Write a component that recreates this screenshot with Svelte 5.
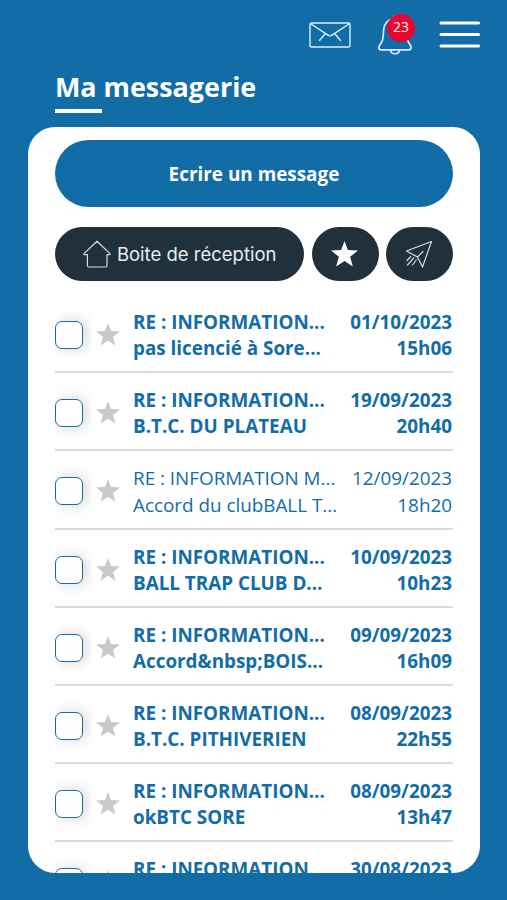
<script lang="ts">
	interface Message {
		subject: string;
		from: string;
		date: string;
		time: string;
		read?: boolean;
	}

	const unread = 23;

	const messages: Message[] = [
		{ subject: 'RE : INFORMATION...', from: 'pas licencié à Sore...', date: '01/10/2023', time: '15h06' },
		{ subject: 'RE : INFORMATION...', from: 'B.T.C. DU PLATEAU', date: '19/09/2023', time: '20h40' },
		{ subject: 'RE : INFORMATION M...', from: 'Accord du clubBALL T...', date: '12/09/2023', time: '18h20', read: true },
		{ subject: 'RE : INFORMATION...', from: 'BALL TRAP CLUB D...', date: '10/09/2023', time: '10h23' },
		{ subject: 'RE : INFORMATION...', from: 'Accord&nbsp;BOIS...', date: '09/09/2023', time: '16h09' },
		{ subject: 'RE : INFORMATION...', from: 'B.T.C. PITHIVERIEN', date: '08/09/2023', time: '22h55' },
		{ subject: 'RE : INFORMATION...', from: 'okBTC SORE', date: '08/09/2023', time: '13h47' },
		{ subject: 'RE : INFORMATION...', from: '', date: '30/08/2023', time: '' }
	];
</script>

<div class="screen">
	<header>
		<button class="icon" aria-label="Messages">
			<svg width="42" height="26" viewBox="0 0 42 26">
				<rect x="1" y="1" width="40" height="24" rx="1.5" />
				<path d="M2 2 L19 13.2 Q21 14.5 23 13.2 L40 2 M16 12 L10.5 18.5 M26 12 L31.5 18.5" />
			</svg>
		</button>
		<button class="icon bell" aria-label="Notifications">
			<svg width="36" height="40" viewBox="0 0 36 40">
				<path d="M18 3.5 C10 4 6.5 10 6.5 16 C6.5 25 5 27 2.2 31 Q1 34.8 4 34.8 H32 Q35 34.8 33.8 31 C31 27 29.5 25 29.5 16 C29.5 10 26 4 18 3.5 Z M13.5 35 C14 40 22 40 22.5 35 M16 3.5 Q16 1.4 18 1.4" />
			</svg>
			<span class="badge">{unread}</span>
		</button>
		<button class="icon menu" aria-label="Menu">
			<svg width="42" height="28" viewBox="0 0 42 28">
				<path d="M3 2 H40.5 M3 13.5 H40.5 M3 25 H40.5" />
			</svg>
		</button>
	</header>

	<h1>Ma messagerie</h1>

	<main>
		<button class="compose">Ecrire un message</button>

		<nav>
			<button class="tab inbox">
				<svg width="28" height="28" viewBox="0 0 28 28">
					<path d="M14 1.2 L1 13.6 Q.6 14.6 1.6 14.6 H4.4 V25.5 Q4.4 27 6 27 H22.5 Q24 27 24 25.5 V14.6 H26.6 Q27.4 14.6 27 13.6 Z" />
				</svg>
				Boite de réception
			</button>
			<button class="tab" aria-label="Favoris">
				<svg class="filled" width="27" height="26" viewBox="0 0 24 23">
					<path d="M12 0 L15 8 L24 8.4 L17 14 L19.4 22.6 L12 17.7 L4.6 22.6 L7 14 L0 8.4 L9 8 Z" />
				</svg>
			</button>
			<button class="tab" aria-label="Envoyés">
				<svg class="plane" width="28" height="28" viewBox="0 0 28 28">
					<path d="M26.5 1.5 L1.5 11 L12.5 17 L17.5 27 Z M12.5 17 L18 11.5 M5.8 16.5 L2 20.5 M8.8 17.8 L2.5 25 M11.2 20 L7.5 25" />
				</svg>
			</button>
		</nav>

		<ul>
			{#each messages as message}
				<li class:read={message.read}>
					<input type="checkbox" aria-label="Sélectionner" />
					<svg class="star" width="24" height="23" viewBox="0 0 24 23">
						<path d="M12 0 L15 8 L24 8.4 L17 14 L19.4 22.6 L12 17.7 L4.6 22.6 L7 14 L0 8.4 L9 8 Z" />
					</svg>
					<div class="text">
						<div>{message.subject}</div>
						<div>{message.from}</div>
					</div>
					<div class="when">
						<div>{message.date}</div>
						<div>{message.time}</div>
					</div>
				</li>
			{/each}
		</ul>
	</main>
</div>

<style>
	:global(body) {
		background: #126da7;
	}

	.screen {
		box-sizing: border-box;
		height: 900px;
		padding: 14px 27px 27px 28px;
		overflow: hidden;
		background: #126da7;
		font-family: 'Open Sans', sans-serif;
		display: flex;
		flex-direction: column;
	}

	button {
		border: none;
		padding: 0;
		font: inherit;
		color: #fff;
		cursor: pointer;
	}

	svg {
		display: block;
		flex: none;
		fill: none;
		stroke: #d9efff;
		stroke-width: 1.4;
		stroke-linejoin: round;
		stroke-linecap: round;
	}

	header {
		height: 42px;
		display: flex;
		justify-content: flex-end;
		align-items: center;
	}

	.icon {
		background: none;
	}

	.bell {
		position: relative;
		margin: 0 25px 0 26px;
	}

	.bell svg {
		stroke-width: 1.7;
	}

	.menu svg {
		stroke: #fff;
		stroke-width: 3;
	}

	.badge {
		position: absolute;
		top: -1px;
		left: 10px;
		width: 28px;
		height: 28px;
		border-radius: 50%;
		background: #e8062f;
		font-size: 14px;
		line-height: 26px;
		text-align: center;
	}

	h1 {
		margin: 13px 0 0 27px;
		font-size: 26.9px;
		line-height: 36px;
		font-weight: 700;
		color: #fff;
	}

	h1::after {
		content: '';
		display: block;
		width: 47px;
		height: 4px;
		margin-top: 4px;
		background: #fff;
	}

	main {
		flex: 1;
		min-height: 0;
		margin-top: 14px;
		padding: 13px 27px 0;
		overflow: hidden;
		background: #fff;
		border-radius: 27px;
	}

	.compose {
		display: block;
		width: 100%;
		height: 67px;
		border-radius: 34px;
		background: #126da7;
		font-size: 18.9px;
		font-weight: 700;
	}

	nav {
		display: flex;
		gap: 7.3px;
		margin-top: 20px;
	}

	.tab {
		width: 67px;
		height: 54px;
		border-radius: 27px;
		background: #20313b;
		display: flex;
		align-items: center;
		justify-content: center;
	}

	.tab svg {
		stroke: #d3dde2;
		stroke-width: 1.2;
	}

	.inbox {
		flex: 1;
		gap: 6px;
		font-family: Inter, sans-serif;
		font-size: 18.5px;
		color: #e6eef2;
		white-space: nowrap;
	}

	.tab .plane {
		margin-right: 2px;
	}

	.tab .filled {
		margin-right: 2px;
		fill: #fff;
		stroke: none;
	}

	ul {
		list-style: none;
		margin: 14px 0 0;
		padding: 0;
	}

	li {
		box-sizing: border-box;
		height: 78.18px;
		padding-top: 14px;
		border-bottom: 2px solid #dcdcdc;
		display: flex;
		color: #126da7;
		font-size: 18.85px;
		line-height: 26.2px;
		font-weight: 700;
		white-space: nowrap;
	}

	li.read {
		font-weight: 400;
	}

	input {
		appearance: none;
		box-sizing: border-box;
		flex: none;
		width: 28px;
		height: 28px;
		margin: 12px 13px 0 0;
		border: 1.5px solid #126da7;
		border-radius: 7px;
		background: #fff;
		box-shadow: 3px 0 14px rgba(0, 0, 0, 0.17);
		clip-path: inset(-16px -9px -16px 0);
	}

	.star {
		margin: 14px 13px 0 0;
		fill: #c9c9c9;
		stroke: none;
	}

	.text {
		flex: 1;
		min-width: 0;
	}

	.when {
		margin-right: 1px;
		text-align: right;
	}
</style>
